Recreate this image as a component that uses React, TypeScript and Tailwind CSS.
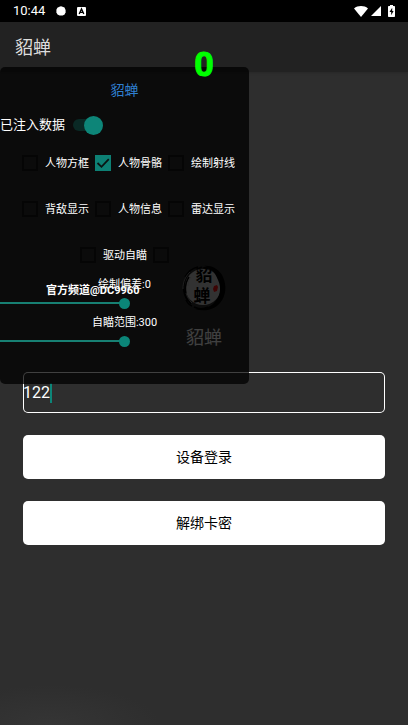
import { useState } from "react";

const funciones = [
  { id: "box", label: "人物方框" },
  { id: "bones", label: "人物骨骼" },
  { id: "rays", label: "绘制射线" },
  { id: "back", label: "背敌显示" },
  { id: "info", label: "人物信息" },
  { id: "radar", label: "雷达显示" },
];

function StatusBar() {
  return (
    <div className="flex h-[22px] items-center bg-black px-[13px] text-white">
      <span className="text-[13px] leading-4">10:44</span>
      <svg viewBox="0 0 10 10" className="ml-[11px] size-[10px]" fill="currentColor">
        <path d="M5 0.3 6.5 0.8 8.5 1.6 9.6 4 9.6 6.2 8.6 8.4 6.6 9.5H3.6L1.5 8.5 0.4 6.4V3.8L1.4 1.7 3.4 0.8Z" />
      </svg>
      <svg viewBox="0 0 9 9" className="ml-[11px] size-[9px]">
        <rect width="9" height="9" rx="1" fill="#fff" />
        <path d="M2.2 7 4.5 1.9 6.8 7M3.2 5.4h2.6" fill="none" stroke="#000" strokeWidth="1.3" />
      </svg>
      <div className="ml-auto flex items-center">
        <svg viewBox="0 0 14 11" className="mr-[3px] h-[11px] w-[14px]" fill="currentColor">
          <path d="M7 11 0 2.4C2 .8 4.4 0 7 0s5 .8 7 2.4Z" />
        </svg>
        <svg viewBox="0 0 10 10" className="mr-[7px] size-[10px]" fill="currentColor">
          <path d="M10 0v10H0Z" />
        </svg>
        <svg viewBox="0 0 7 12" className="h-3 w-[7px]">
          <path d="M2 0h3v1h1.200q.8 0 .8.8v9.400q0 .8-.8.8H.8q-.8 0-.8-.8V1.800Q0 1 .8 1H2Z" fill="#fff" />
          <path d="M4.2 2.8 1.5 7h1.7v3.2L5.6 6H4.2Z" fill="#000" />
        </svg>
      </div>
    </div>
  );
}

function Logo() {
  return (
    <svg viewBox="0 0 48 48" className="size-12" role="img" aria-label="貂蝉">
      <circle cx="23" cy="23" r="18" fill="#c8c8c8" />
      <path
        d="M24 2C32 1 40 6 43 13c4 9 3 19-3 26-6 7-16 9-25 6 8 0 14-1 19-6 6-6 8-15 4-23C35 8 31 4 24 2Z"
        fill="#000"
      />
      <path
        d="M8 37C2 29 2 16 10 8M11 40C4 32 4 20 9 13M18 3C12 4 8 8 5 13M12 42c-3-1-5-4-6-6M14 43c4 2 10 2 14 0"
        fill="none"
        stroke="#000"
        strokeWidth="1.5"
      />
      <path d="M3 25C3 18 5 13 10 8M6 29c1 4 3 7 6 10M8 22c0-4 1-7 3-9" fill="none" stroke="#aaa" strokeWidth="0.7" />
      <g fill="#000" fontSize="17" fontWeight="700" textAnchor="middle">
        <text x="24" y="17">
          貂
        </text>
        <text x="22" y="38">
          蝉
        </text>
      </g>
      <path d="M34 22l3-1 1 2-1 4-3 1-1-3Z" fill="#f01010" />
    </svg>
  );
}

function CheckItem({ label, checked, onChange }: { label: string; checked: boolean; onChange: () => void }) {
  return (
    <label className="flex h-4 items-center gap-[7px]">
      <span className="grid size-4 place-items-center">
        <input
          type="checkbox"
          checked={checked}
          onChange={onChange}
          aria-label={label || "其他"}
          className="col-start-1 row-start-1 size-4 appearance-none border-2 border-[#050505] checked:border-[#0d8074] checked:bg-[#0d8074]"
        />
        {checked && (
          <svg viewBox="0 0 16 16" className="pointer-events-none z-10 col-start-1 row-start-1 size-4">
            <path d="M2.5 8 6.5 11.8 13.8 4.2" fill="none" stroke="#0a1413" strokeWidth="1.8" />
          </svg>
        )}
      </span>
      {label && <span className="pt-0.5 text-[11px] leading-4">{label}</span>}
    </label>
  );
}

type RangeProps = { label: string; value: number; min: number; max: number; onChange: (v: number) => void };

function RangeItem({ label, value, min, max, onChange }: RangeProps) {
  const pct = ((value - min) / (max - min)) * 100;
  return (
    <label className="flex flex-col text-center text-[11px] leading-4">
      <span className="pt-0.5">
        {label}:{value}
      </span>
      <span className="flex h-5 items-center">
        <input
          type="range"
          min={min}
          max={max}
          value={value}
          onChange={(e) => onChange(Number(e.target.value))}
          style={{ backgroundImage: `linear-gradient(to right, #178073 ${pct}%, transparent ${pct}%)` }}
          className="h-[2px] w-full appearance-none [&::-webkit-slider-thumb]:size-[11px] [&::-webkit-slider-thumb]:appearance-none [&::-webkit-slider-thumb]:rounded-full [&::-webkit-slider-thumb]:bg-[#0b8578]"
        />
      </span>
    </label>
  );
}

function FloatingPanel() {
  const [inject, setInject] = useState(true);
  const [active, setActive] = useState<string[]>(["bones"]);
  const [offset, setOffset] = useState(0);
  const [range, setRange] = useState(300);

  const toggle = (id: string) => {
    setActive((prev) => (prev.includes(id) ? prev.filter((x) => x !== id) : [...prev, id]));
  };

  return (
    <aside className="absolute left-0 top-[67px] w-[249px] rounded-[5px] bg-black/75 pb-[33px] pt-3 text-white">
      <h2 className="text-center text-[14px] leading-[22px] text-[#2f7fd0]">貂蝉</h2>

      <label className="mt-3 flex h-6 items-center gap-2 text-[13px]">
        已注入数据
        <input
          type="checkbox"
          role="switch"
          checked={inject}
          onChange={() => setInject(!inject)}
          className="flex h-3 w-[30px] appearance-none items-center rounded-full bg-[#0a2925] before:size-[19px] before:shrink-0 before:rounded-full before:bg-[#0d8578] checked:justify-end"
        />
      </label>

      <div className="mt-[18px] flex flex-wrap gap-x-[6px] gap-y-[30px] pl-[22px]">
        {funciones.map((f) => (
          <CheckItem key={f.id} label={f.label} checked={active.includes(f.id)} onChange={() => toggle(f.id)} />
        ))}
      </div>
      <div className="mt-[30px] flex justify-center gap-[6px]">
        <CheckItem label="驱动自瞄" checked={active.includes("aim")} onChange={() => toggle("aim")} />
        <CheckItem label="" checked={active.includes("other")} onChange={() => toggle("other")} />
      </div>

      <div className="mt-3">
        <RangeItem label="绘制偏差" value={offset} min={-100} max={100} onChange={setOffset} />
        <RangeItem label="自瞄范围" value={range} min={0} max={600} onChange={setRange} />
      </div>
    </aside>
  );
}

export default function App() {
  const [card, setCard] = useState("122");

  return (
    <div className="relative min-h-screen bg-[#2e2e2e] bg-[radial-gradient(ellipse_110px_40px_at_50px_100%,#353535,transparent)] font-['Roboto','Noto_Sans_CJK_SC',sans-serif]">
      <StatusBar />
      <header className="flex h-[50px] items-center bg-[#222222] px-[15px] shadow-sm">
        <h1 className="text-[18px] text-[#dddddd]">貂蝉</h1>
      </header>

      <main className="flex flex-col items-center px-[23px] pt-48">
        <Logo />
        <p className="mt-3 text-[18px] leading-7 text-white">貂蝉</p>

        <label className="mt-5 flex h-[41px] w-full items-center rounded-[5px] text-white inset-ring inset-ring-white">
          <input
            aria-label="卡密"
            value={card}
            onChange={(e) => setCard(e.target.value)}
            className="field-sizing-content text-[16px] caret-transparent outline-none"
          />
          <span className="h-5 w-0.5 bg-[#0d8578]" />
        </label>

        <button className="mt-[22px] h-11 w-full rounded-[5px] bg-white text-[14px] text-black">设备登录</button>
        <button className="mt-[22px] h-11 w-full rounded-[5px] bg-white text-[14px] text-black">解绑卡密</button>
      </main>

      <FloatingPanel />

      {/* Textos dibujados encima del panel */}
      <p className="pointer-events-none absolute inset-x-0 top-11 text-center text-[34px] font-bold leading-10 text-[#00ff00] [-webkit-text-stroke:1px_#00ff00]">
        0
      </p>
      <p className="pointer-events-none absolute left-[46px] top-[283px] text-[11px] font-bold leading-4 text-white">
        官方频道@DC9960
      </p>
    </div>
  );
}
